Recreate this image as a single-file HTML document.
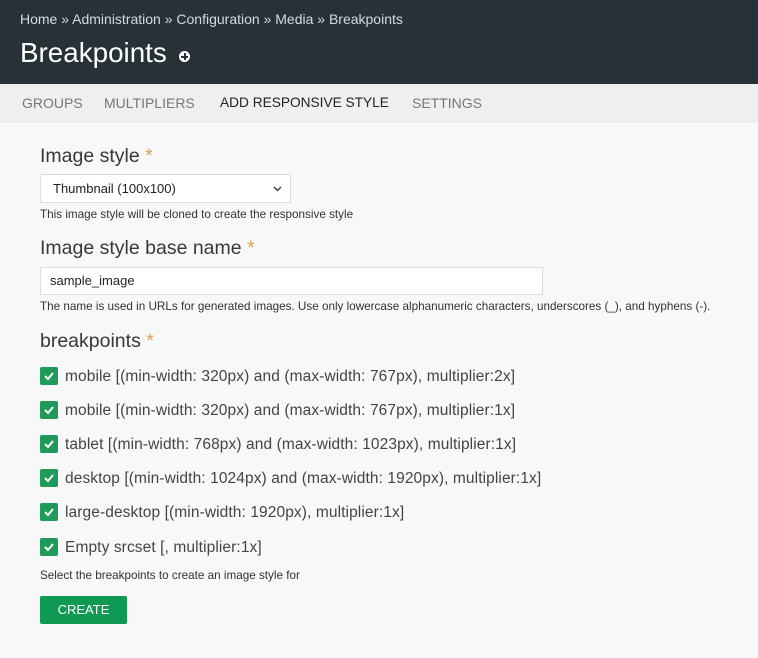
<!DOCTYPE html>
<html><head><meta charset="utf-8"><style>
body{margin:0;width:758px;height:658px;background:#f8f8f8;font-family:"Liberation Sans",sans-serif;position:relative;overflow:hidden;color:#333}
.hdr{position:absolute;left:0;top:0;width:758px;height:84px;background:#273238}
.bc{position:absolute;left:20px;top:11px;font-size:14px;color:#d6dadc}
.h1{position:absolute;left:20px;top:37px;font-size:27.8px;color:#fff}
.plus{position:absolute;left:179px;top:51px;width:11px;height:11px;border-radius:50%;background:#fff}
.plus:before{content:"";position:absolute;left:2px;top:4.5px;width:7px;height:2px;background:#273238}
.plus:after{content:"";position:absolute;left:4.5px;top:2px;width:2px;height:7px;background:#273238}
.tabs{position:absolute;left:0;top:84px;width:758px;height:37px;background:#efefef;box-shadow:0 1px 2px rgba(0,0,0,.08)}
.tab{position:absolute;top:11px;font-size:14px;color:#777}
.a{position:absolute;left:40px}
.lbl{font-size:19.5px;color:#383838}
.st{color:#e0a15a}
.desc{font-size:11.7px;color:#333}
.inp{position:absolute;left:40px;background:#fff;border:1px solid #ddd;box-sizing:border-box;font-size:13px;color:#222;padding-left:12px}
.cb{position:absolute;left:40px;width:18px;height:18px;background:#1e9a5a;border-radius:2px}
.cb svg{position:absolute;left:3px;top:3px}
.ct{position:absolute;left:65px;font-size:15.5px;letter-spacing:.1px;color:#444}
.btn{position:absolute;left:40px;top:596px;width:87px;height:28px;background:#0f9a54;border-radius:2px;color:#fff;font-size:13px;text-align:center;line-height:28px}
</style></head><body>
<div class="hdr"><div class="bc">Home » Administration » Configuration » Media » Breakpoints</div><div class="h1">Breakpoints</div><div class="plus"></div></div>
<div class="tabs"><span class="tab" style="left:22px">GROUPS</span><span class="tab" style="left:104px">MULTIPLIERS</span><span class="tab" style="left:220px;color:#222;font-size:13.7px">ADD RESPONSIVE STYLE</span><span class="tab" style="left:412px">SETTINGS</span></div>
<div class="a lbl" style="top:145px">Image style <span class="st">*</span></div>
<div class="inp" style="top:174px;width:251px;height:29px;line-height:27px">Thumbnail (100x100)<svg style="position:absolute;right:8px;top:11px" width="9" height="6"><path d="M1 1L4.5 4.5L8 1" stroke="#444" stroke-width="1.5" fill="none"/></svg></div>
<div class="a desc" style="top:208px">This image style will be cloned to create the responsive style</div>
<div class="a lbl" style="top:237px">Image style base name <span class="st">*</span></div>
<div class="inp" style="top:267px;width:503px;height:28px;line-height:26px;padding-left:9px">sample_image</div>
<div class="a desc" style="top:300px">The name is used in URLs for generated images. Use only lowercase alphanumeric characters, underscores (_), and hyphens (-).</div>
<div class="a lbl" style="top:330px">breakpoints <span class="st">*</span></div>
<div class="cb" style="top:367px"><svg width="12" height="12"><path d="M2 6L5 9L10 3" stroke="#fff" stroke-width="2" fill="none"/></svg></div><div class="ct" style="top:368px">mobile [(min-width: 320px) and (max-width: 767px), multiplier:2x]</div>
<div class="cb" style="top:401px"><svg width="12" height="12"><path d="M2 6L5 9L10 3" stroke="#fff" stroke-width="2" fill="none"/></svg></div><div class="ct" style="top:402px">mobile [(min-width: 320px) and (max-width: 767px), multiplier:1x]</div>
<div class="cb" style="top:435px"><svg width="12" height="12"><path d="M2 6L5 9L10 3" stroke="#fff" stroke-width="2" fill="none"/></svg></div><div class="ct" style="top:436px">tablet [(min-width: 768px) and (max-width: 1023px), multiplier:1x]</div>
<div class="cb" style="top:469px"><svg width="12" height="12"><path d="M2 6L5 9L10 3" stroke="#fff" stroke-width="2" fill="none"/></svg></div><div class="ct" style="top:470px">desktop [(min-width: 1024px) and (max-width: 1920px), multiplier:1x]</div>
<div class="cb" style="top:503px"><svg width="12" height="12"><path d="M2 6L5 9L10 3" stroke="#fff" stroke-width="2" fill="none"/></svg></div><div class="ct" style="top:504px">large-desktop [(min-width: 1920px), multiplier:1x]</div>
<div class="cb" style="top:538px"><svg width="12" height="12"><path d="M2 6L5 9L10 3" stroke="#fff" stroke-width="2" fill="none"/></svg></div><div class="ct" style="top:539px">Empty srcset [, multiplier:1x]</div>
<div class="a desc" style="top:569px">Select the breakpoints to create an image style for</div>
<div class="btn">CREATE</div>
</body></html>
